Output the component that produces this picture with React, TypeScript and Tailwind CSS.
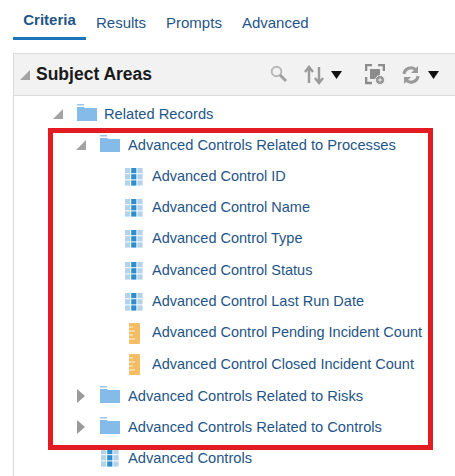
import React from 'react';

function Folder() {
  return (
    <svg width="20" height="20" viewBox="0 0 20 20" className="shrink-0">
      <path d="M0 0h7v1.5H0z" fill="#9cc4e4" />
      <path d="M0 3h7l1 1h12v13H0z" fill="#85bbe8" />
    </svg>
  );
}

function Column() {
  const cells = [0, 1, 2, 3, 4, 5, 6, 7, 8];
  return (
    <svg width="18" height="18" viewBox="0 0 18 18" className="shrink-0">
      {cells.map(i => (
        <rect
          key={i}
          x={(i % 3) * 6.2}
          y={Math.floor(i / 3) * 6.2}
          width="5.2"
          height="5.2"
          fill={i % 3 === 1 ? '#2d8fd0' : '#b4d2ea'}
        />
      ))}
    </svg>
  );
}

function Measure() {
  return (
    <svg width="11" height="21" viewBox="0 0 11 21" className="shrink-0">
      <rect width="11" height="21" rx="1" fill="#f2bd63" />
      <path d="M0 4h4M0 8h6M0 12h4M0 16h6" stroke="#fdf3df" strokeWidth="1" />
    </svg>
  );
}

function Caret({ open }: { open: boolean }) {
  return open ? (
    <svg width="10" height="10" viewBox="0 0 10 10" className="shrink-0">
      <path d="M10 0v10H0z" fill="#a3a3a3" />
    </svg>
  ) : (
    <svg width="8" height="14" viewBox="0 0 8 14" className="shrink-0">
      <path d="M0 0l8 7-8 7z" fill="#9a9a9a" />
    </svg>
  );
}

interface RowProps {
  indent: string;
  caret?: 'open' | 'closed';
  caretWidth?: string;
  icon: React.ReactNode;
  label: string;
  labelClass: string;
}

function Row({ indent, caret, caretWidth = 'w-[24px]', icon, label, labelClass }: RowProps) {
  return (
    <div className={`flex h-[31.3px] items-center ${indent}`}>
      {caret && (
        <div className={`flex shrink-0 items-center ${caretWidth}`}>
          <Caret open={caret === 'open'} />
        </div>
      )}
      {icon}
      <span className={`whitespace-nowrap ${labelClass}`}>{label}</span>
    </div>
  );
}

function ChevronDown() {
  return (
    <svg width="11" height="8" viewBox="0 0 11 8" className="shrink-0">
      <path d="M0 0h11L5.5 8z" fill="#111" />
    </svg>
  );
}

export default function App() {
  return (
    <div className="relative h-[476px] w-[455px] overflow-hidden bg-white font-['Liberation_Sans',Arial,sans-serif] text-[14.5px] text-[#1f5587]">
      <div className="flex h-[53px] items-start pl-[13px] text-[15px]">
        <div className="flex h-[40px] w-[73px] items-center justify-center border-b-[3px] border-[#1b75bb] pt-[3px] font-bold">
          Criteria
        </div>
        <div className="ml-[10px] mt-[12px]">Results</div>
        <div className="ml-[20px] mt-[12px]">Prompts</div>
        <div className="ml-[20px] mt-[12px]">Advanced</div>
      </div>

      <div className="ml-[13px] h-[423px] border-l border-t border-[#d9d9d9]">
        <div className="flex h-[42px] items-center border-b border-[#d9d9d9] bg-[#f2f2f2] pl-[6px]">
          <svg width="10" height="10" viewBox="0 0 10 10" className="shrink-0">
            <path d="M10 0v10H0z" fill="#a3a3a3" />
          </svg>
          <span className="ml-[6px] text-[17.5px] font-bold text-[#1a1a1a]">Subject Areas</span>
          <div className="ml-[118px] flex items-center">
            <svg width="18" height="19" viewBox="0 0 18 19" className="shrink-0">
              <circle cx="6.5" cy="6.5" r="4.8" fill="none" stroke="#b8b8b8" strokeWidth="2" />
              <path d="M10 10l6 6" stroke="#a0a0a0" strokeWidth="3" />
            </svg>
            <svg width="20" height="20" viewBox="0 0 20 20" className="ml-[16px] shrink-0">
              <path d="M5 18V3M1 7l4-5 4 5" fill="none" stroke="#9a9a9a" strokeWidth="2.4" />
              <path d="M15 2v16M11 13l4 5 4-5" fill="none" stroke="#9a9a9a" strokeWidth="2.4" />
            </svg>
            <div className="ml-[7px]"><ChevronDown /></div>
            <svg width="20" height="21" viewBox="0 0 20 21" className="ml-[23px] shrink-0">
              <path d="M1 7V1h6M13 1h6v6M1 13v6h6" fill="none" stroke="#8c8c8c" strokeWidth="2.6" />
              <rect x="5" y="5" width="10" height="10" fill="#8c8c8c" />
              <circle cx="15" cy="16" r="4.5" fill="#8c8c8c" stroke="#f2f2f2" />
              <path d="M15 13.5v5M12.5 16h5" stroke="#f2f2f2" />
            </svg>
            <svg width="20" height="20" viewBox="0 0 20 20" className="ml-[16px] shrink-0">
              <path d="M3 9a7 7 0 0 1 12-4" fill="none" stroke="#9a9a9a" strokeWidth="3" />
              <path d="M17 1v7h-7z" fill="#9a9a9a" />
              <path d="M17 11a7 7 0 0 1-12 4" fill="none" stroke="#9a9a9a" strokeWidth="3" />
              <path d="M3 19v-7h7z" fill="#9a9a9a" />
            </svg>
            <div className="ml-[7px]"><ChevronDown /></div>
          </div>
        </div>

        <div className="pt-[2.4px]">
          <Row indent="pl-[39px]" caret="open" icon={<Folder />} labelClass="ml-[7px] text-[14.7px]" label="Related Records" />
          <Row indent="pl-[62px]" caret="open" icon={<Folder />} labelClass="ml-[8px] text-[14.7px]" label="Advanced Controls Related to Processes" />
          <Row indent="pl-[111px]" icon={<Column />} labelClass="ml-[9px]" label="Advanced Control ID" />
          <Row indent="pl-[111px]" icon={<Column />} labelClass="ml-[9px]" label="Advanced Control Name" />
          <Row indent="pl-[111px]" icon={<Column />} labelClass="ml-[9px]" label="Advanced Control Type" />
          <Row indent="pl-[111px]" icon={<Column />} labelClass="ml-[9px]" label="Advanced Control Status" />
          <Row indent="pl-[111px]" icon={<Column />} labelClass="ml-[9px]" label="Advanced Control Last Run Date" />
          <Row indent="pl-[115px]" icon={<Measure />} labelClass="ml-[12px]" label="Advanced Control Pending Incident Count" />
          <Row indent="pl-[115px]" icon={<Measure />} labelClass="ml-[12px]" label="Advanced Control Closed Incident Count" />
          <Row indent="pl-[63px]" caret="closed" caretWidth="w-[23px]" icon={<Folder />} labelClass="ml-[8px] text-[14.7px]" label="Advanced Controls Related to Risks" />
          <Row indent="pl-[63px]" caret="closed" caretWidth="w-[23px]" icon={<Folder />} labelClass="ml-[8px] text-[14.7px]" label="Advanced Controls Related to Controls" />
          <Row indent="pl-[87px]" icon={<Column />} labelClass="ml-[9px] text-[14.7px]" label="Advanced Controls" />
        </div>
      </div>

      {/* red annotation box drawn over the tree */}
      <div className="absolute left-[48px] top-[128px] h-[322px] w-[385px] border-[5px] border-[#e31b23]" />
    </div>
  );
}
